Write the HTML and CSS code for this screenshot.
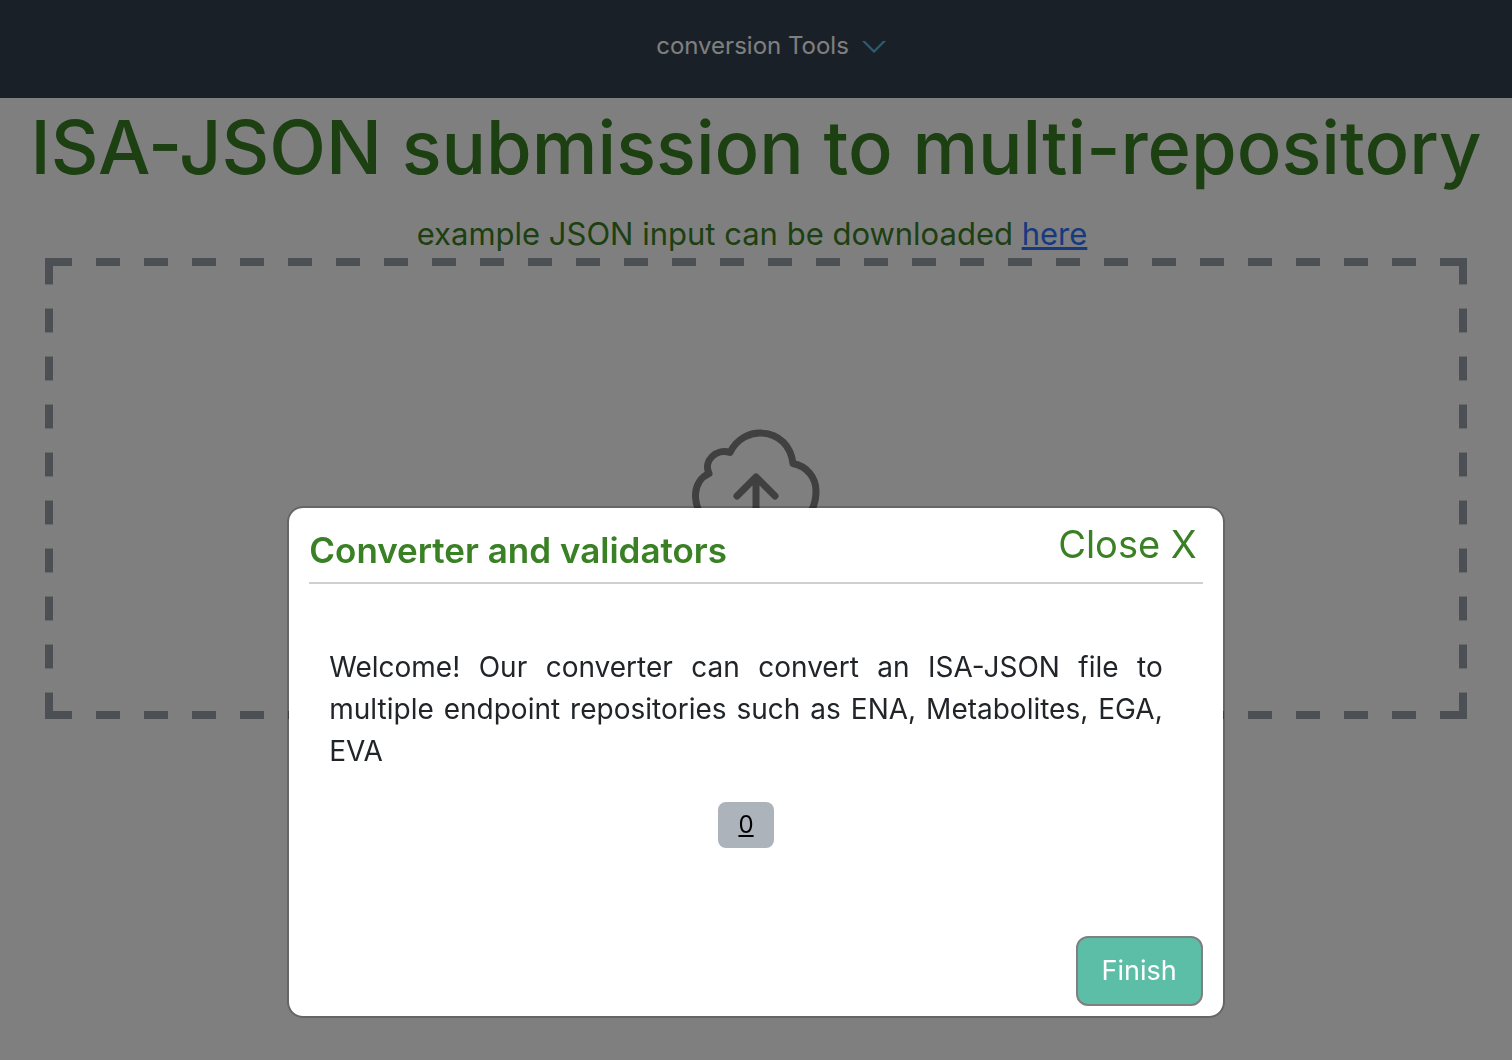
FILE: index.html
```
<!DOCTYPE html>
<html lang="en">
<head>
<meta charset="utf-8">
<meta name="viewport" content="width=device-width, initial-scale=1">
<title>ISA-JSON submission to multi-repository</title>
<link rel="stylesheet" href="styles.css">
</head>
<body>
<nav class="navbar">
  <button class="menu-button" type="button">
    <span>conversion Tools</span>
    <svg class="chevron" viewBox="0 0 24 14" aria-hidden="true"><path d="M0 2h3l9 9 9-9h3L12 14z"/></svg>
  </button>
</nav>
<main class="page">
  <h1 class="title">ISA-JSON submission to multi-repository</h1>
  <p class="example">example JSON input can be downloaded <a href="#example">here</a></p>
  <div class="dropzone">
    <svg class="cloud" viewBox="0 0 128 128" aria-hidden="true">
      <path d="M26 96C10 92 3 79 3.500 65C4 56 9 48 17 44.500C11 32 24 19 38 23.500C45 9 59 3 70 4C87 5 99 17 101 34.500C115 37 124 49 124 62C124 80 115 92 102 96M64 94V48M45 67L64 48L83 67"/>
    </svg>
  </div>
</main>
<div class="overlay">
  <section class="modal" role="dialog" aria-modal="true" aria-labelledby="modal-title">
    <header class="modal-header">
      <h2 class="modal-title" id="modal-title">Converter and validators</h2>
      <button class="close" type="button">Close X</button>
    </header>
    <div class="modal-body">
      <p class="welcome">Welcome! Our converter can convert an ISA-JSON file to multiple endpoint repositories such as ENA, Metabolites, EGA, EVA</p>
      <a class="step" href="#step-0">0</a>
    </div>
    <footer class="modal-footer">
      <button class="finish" type="button">Finish</button>
    </footer>
  </section>
</div>
</body>
</html>
```
FILE: styles.css
```
* { box-sizing: border-box; }
body {
  margin: 0;
  background: #fff;
  color: #212529;
  font-family: Inter, "Liberation Sans", sans-serif;
}
button { font-family: inherit; cursor: pointer; }
.navbar {
  display: flex;
  justify-content: center;
  height: 98px;
  padding: 26px 0 32px 30px;
  background: #34404e;
}
.menu-button {
  display: flex;
  align-items: center;
  gap: 13px;
  padding: 0;
  border: 0;
  background: none;
  color: #fff;
  font-size: 24px;
  line-height: 40px;
}
.chevron { width: 24px; height: 14px; fill: #5abaea; }
.title {
  margin: 0 0 16px;
  padding-top: 2px;
  color: #3a8024;
  font-size: 74px;
  font-weight: 500;
  line-height: 94px;
  text-align: center;
}
.example {
  margin: 0;
  padding-right: 8px;
  color: #3a8024;
  font-size: 31px;
  line-height: 48px;
  text-align: center;
}
.example a { color: #2f74ff; }
/* Long dashes drawn as tiles centred on each edge, plus a solid block in each corner */
.dropzone {
  --dash: #99a1a8 12px, transparent 12px 36px, #99a1a8 36px;
  --corner: linear-gradient(#99a1a8, #99a1a8);
  display: flex;
  justify-content: center;
  align-items: center;
  margin: 0 45px;
  padding-top: 8px;
  min-height: 461px;
  background:
    var(--corner) left top / 8px 8px no-repeat,
    var(--corner) right top / 8px 8px no-repeat,
    var(--corner) left bottom / 8px 8px no-repeat,
    var(--corner) right bottom / 8px 8px no-repeat,
    linear-gradient(90deg, var(--dash)) top / 48px 8px repeat-x,
    linear-gradient(90deg, var(--dash)) bottom / 48px 8px repeat-x,
    linear-gradient(var(--dash)) left / 8px 48px repeat-y,
    linear-gradient(var(--dash)) right / 8px 48px repeat-y;
}
.cloud {
  width: 128px;
  height: 128px;
  fill: none;
  stroke: #808080;
  stroke-width: 7;
  stroke-linecap: round;
  stroke-linejoin: round;
}
.overlay {
  position: fixed;
  inset: 0;
  display: flex;
  justify-content: center;
  align-items: flex-end;
  padding-bottom: 42px;
  background: rgba(0, 0, 0, 0.5);
}
.modal {
  display: flex;
  flex-direction: column;
  width: 62%;
  min-height: 512px;
  padding: 0 20px 10px;
  border: 2px solid rgba(0, 0, 0, 0.2);
  border-radius: 16px;
  background: #fff;
  background-clip: padding-box;
}
.modal-header {
  display: flex;
  justify-content: space-between;
  align-items: flex-start;
  padding: 12px 0 8px;
  border-bottom: 2px solid #d0d0d0;
}
.modal-title {
  margin: 6px 0 0;
  color: #3a8024;
  font-size: 35px;
  font-weight: 600;
  line-height: 48px;
}
.close {
  padding: 0 6px;
  border: 0;
  background: none;
  color: #3a8024;
  font-size: 38px;
  line-height: 48px;
}
.modal-body {
  flex: 1;
  display: flex;
  flex-direction: column;
  align-items: center;
  gap: 30px;
  padding: 62px 40px 20px 20px;
}
.welcome {
  margin: 0;
  font-size: 28px;
  line-height: 42px;
  text-align: justify;
}
.step {
  padding: 0 20px;
  border-radius: 8px;
  background: #adb3bb;
  color: #000;
  font-size: 24px;
  line-height: 46px;
}
.modal-footer { display: flex; justify-content: flex-end; }
.finish {
  padding: 0 24px;
  border: 2px solid #808080;
  border-radius: 12px;
  background: #5dbea8;
  color: #fff;
  font-size: 27px;
  line-height: 66px;
}
```
